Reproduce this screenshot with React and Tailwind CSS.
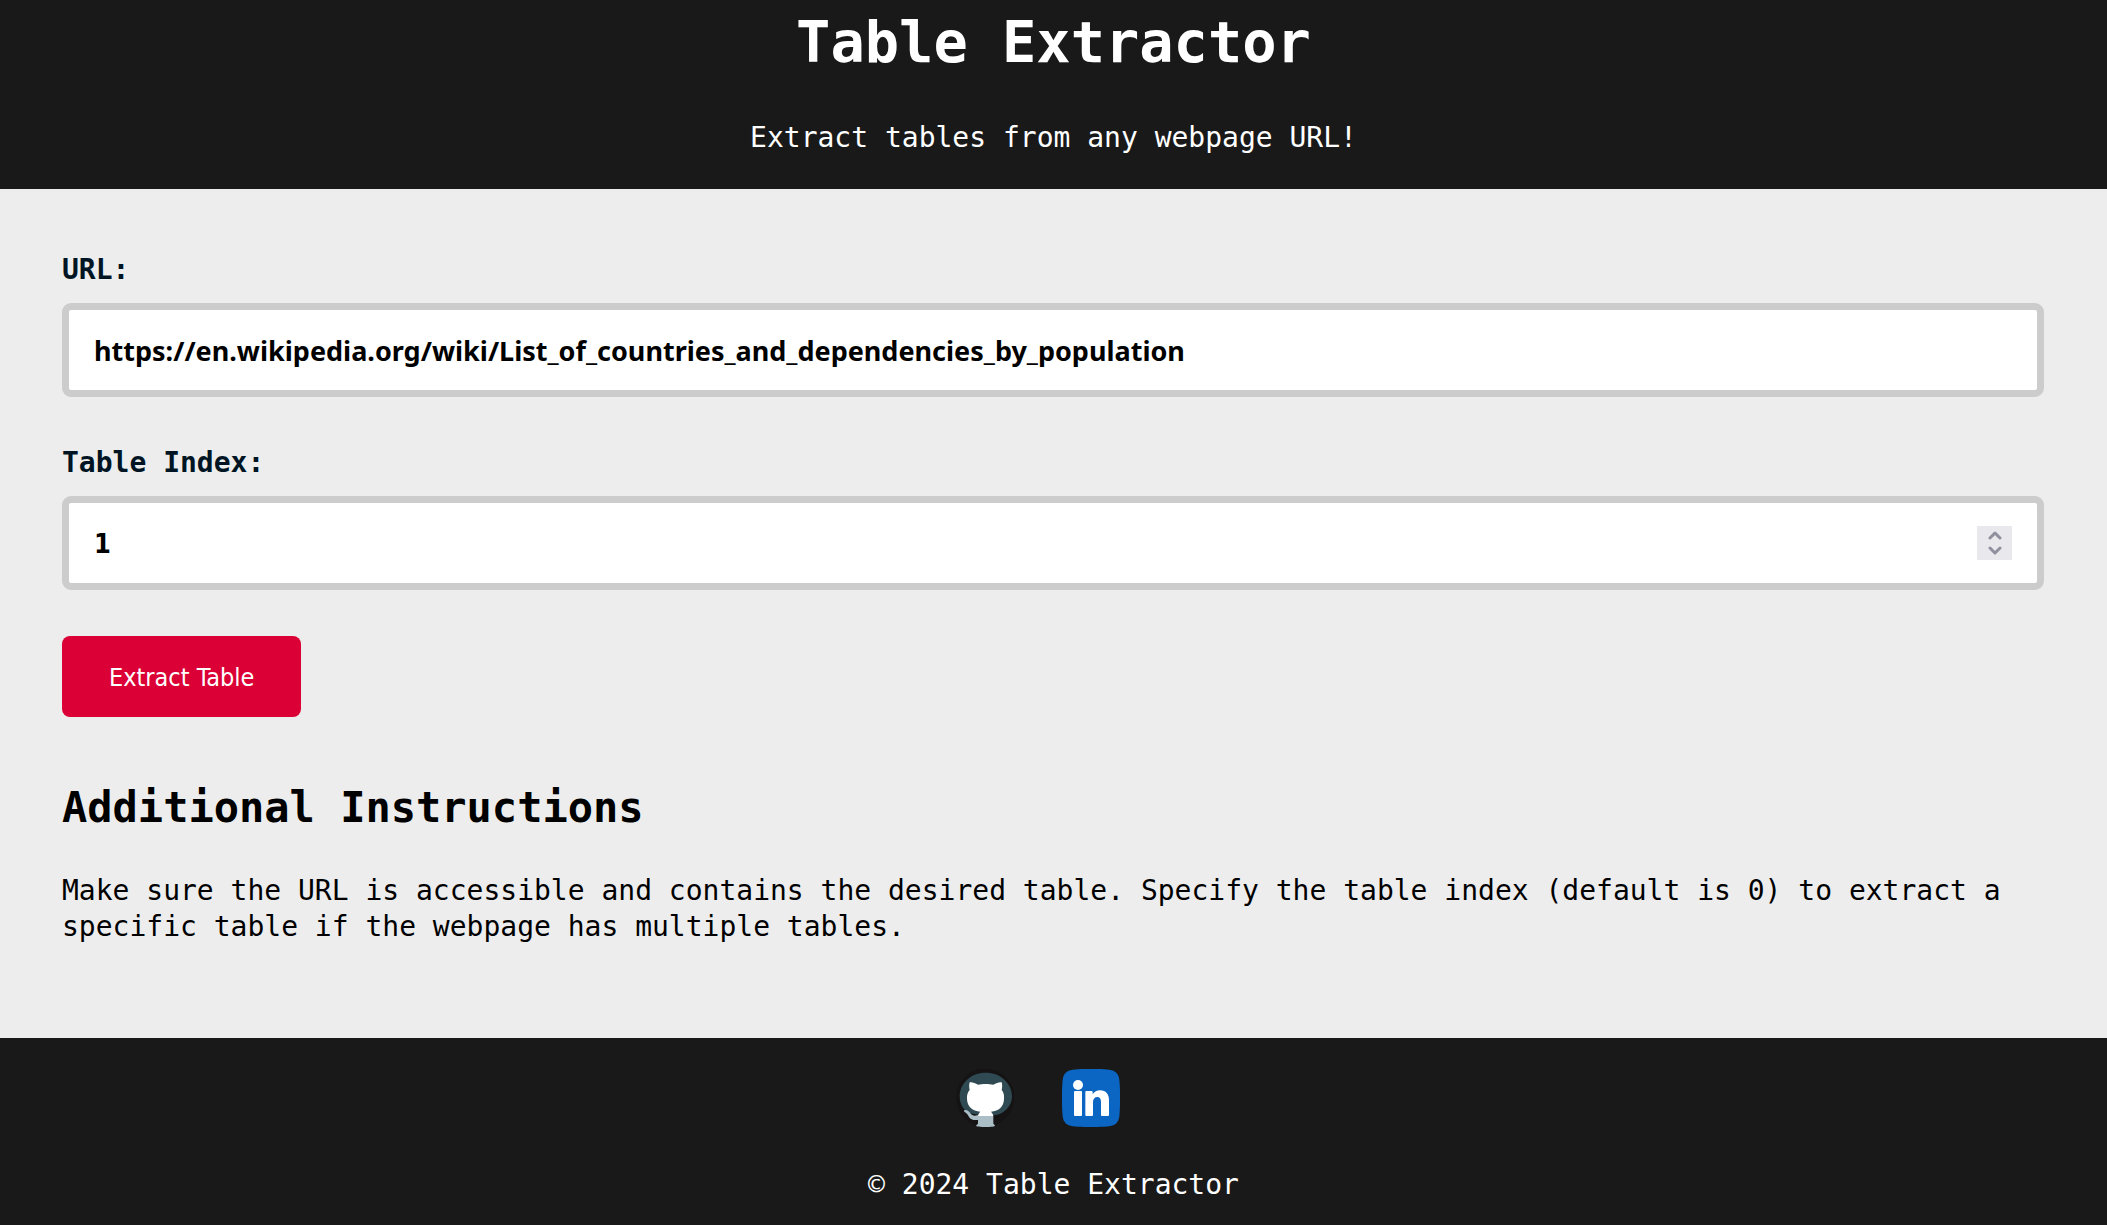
import { useState } from "react";

function GithubLogo() {
  return (
    <svg viewBox="15 24 174 174" className="size-[58px]" aria-hidden="true">
      <circle cx="103" cy="110" r="87" fill="#151314" />
      <path
        d="M104 35C60 35 26 67 26 106c0 22 10 40 26 50l40 7h34c12 0 22-3 30-9 17-12 27-28 27-48 0-39-34-71-79-71z"
        fill="#2f4a52"
      />
      <path
        d="M81 165v11c-10 3-21 1-27-8-4-7-7-11-12-14-4-2-4-7 1-7 7 0 11 4 15 10 5 7 13 9 22 5zM81 164h46v22c0 3 1 4 4 6 1 1 1 3-1 4-8 3-44 3-53 0-2-1-2-3 0-4 3-2 4-3 4-6z"
        fill="#abbdc5"
      />
      <path
        d="M56 64c5-2 16 1 25 7 13-3 33-3 46 0 9-6 20-9 25-7 2 7 2 16 0 23 6 7 8 16 7 27-1 24-15 36-39 38 5 5 6 8 7 13H81c1-6 3-9 7-13-24-2-39-14-40-38-1-11 2-20 8-27-2-7-2-16 0-23z"
        fill="#ffffff"
      />
    </svg>
  );
}

function LinkedinLogo() {
  return (
    <svg viewBox="18 18 174 174" className="size-[58px]" aria-hidden="true">
      <path
        d="M50 20c30-3 80-3 110 0 18 2 28 12 30 30 3 30 3 80 0 110-2 18-12 28-30 30-30 3-80 3-110 0-18-2-28-12-30-30-3-30-3-80 0-110 2-18 12-28 30-30z"
        fill="#0a66c2"
      />
      <circle cx="66" cy="66" r="15" fill="#ffffff" />
      <path
        d="M57 84h18q3 0 3 3v69q0 3-3 3H57q-3 0-3-3V87q0-3 3-3z"
        fill="#ffffff"
      />
      <path
        d="M91 84h16q3 0 3 3v7c5-8 13-12 22-12 18 0 27 12 27 31v43q0 3-3 3h-18q-3 0-3-3v-40c0-9-4-14-11-14-8 0-13 6-13 15v39q0 3-3 3H91q-3 0-3-3V87q0-3 3-3z"
        fill="#ffffff"
      />
    </svg>
  );
}

function Chevron({ d }) {
  return (
    <svg
      viewBox="0 0 14 9"
      className="h-[9px] w-[14px]"
      fill="none"
      stroke="#8f8f9d"
      strokeWidth="3"
      strokeLinecap="round"
      strokeLinejoin="round"
      aria-hidden="true"
    >
      <path d={d} />
    </svg>
  );
}

const label = "text-[28px] leading-9 font-bold text-[#001524]";
const field =
  "mt-[15px] h-[94px] w-full rounded-[9px] border-[7px] border-[#cccccc] bg-white px-[25px] text-[27px] font-bold text-black outline-none";

export default function App() {
  const [url, setUrl] = useState(
    "https://en.wikipedia.org/wiki/List_of_countries_and_dependencies_by_population"
  );
  const [index, setIndex] = useState(1);

  return (
    <div className="flex min-h-screen flex-col bg-[#ededed] font-['DejaVu_Sans_Mono',monospace] text-[28px] leading-9 text-black">
      <header className="bg-[#191919] pb-[33px] text-center text-white">
        <h1 className="text-[57px] leading-[84px] font-bold">Table Extractor</h1>
        <p className="mt-9">Extract tables from any webpage URL!</p>
      </header>

      <main className="grow pt-[63px] pr-[63px] pb-[93px] pl-[62px]">
        <form onSubmit={(e) => e.preventDefault()} className="flex flex-col items-start">
          <label htmlFor="url" className={label}>
            URL:
          </label>
          <input
            id="url"
            type="text"
            value={url}
            onChange={(e) => setUrl(e.target.value)}
            className={`${field} font-['Noto_Sans',sans-serif]`}
          />

          <label htmlFor="index" className={`${label} mt-12`}>
            Table Index:
          </label>
          <div className="relative w-full">
            <input
              id="index"
              type="number"
              value={index}
              onChange={(e) => setIndex(Number(e.target.value))}
              className={`${field} block [appearance:textfield] font-['DejaVu_Sans_Condensed',sans-serif]`}
            />
            <div className="absolute top-[15px] right-8 bottom-0 flex items-center">
              <div className="flex h-[34px] w-[35px] flex-col bg-[#e9e9ed]">
                <button
                  type="button"
                  aria-label="Increase table index"
                  onClick={() => setIndex(index + 1)}
                  className="flex flex-1 items-end justify-center pb-[3px]"
                >
                  <Chevron d="M2 7l5-5 5 5" />
                </button>
                <button
                  type="button"
                  aria-label="Decrease table index"
                  onClick={() => setIndex(index - 1)}
                  className="flex flex-1 items-start justify-center pt-[3px]"
                >
                  <Chevron d="M2 2l5 5 5-5" />
                </button>
              </div>
            </div>
          </div>

          <button
            type="submit"
            className="mt-[46px] rounded-lg bg-[#db0035] px-[47px] pt-[23px] pb-[21px] font-['DejaVu_Sans_Condensed',sans-serif] text-[25px] leading-[37px] text-white"
          >
            Extract Table
          </button>
        </form>

        <section className="mt-16">
          <h2 className="text-[42px] leading-[54px] font-bold">Additional Instructions</h2>
          <p className="mt-[38px]">
            Make sure the URL is accessible and contains the desired table. Specify the table index
            (default is 0) to extract a specific table if the webpage has multiple tables.
          </p>
        </section>
      </main>

      <footer className="bg-[#191919] pt-[31px] pb-[22px] text-center text-white">
        <div className="flex justify-center gap-12 pr-8">
          <a href="#github" aria-label="GitHub">
            <GithubLogo />
          </a>
          <a href="#linkedin" aria-label="LinkedIn">
            <LinkedinLogo />
          </a>
        </div>
        <p className="mt-10">© 2024 Table Extractor</p>
      </footer>
    </div>
  );
}
